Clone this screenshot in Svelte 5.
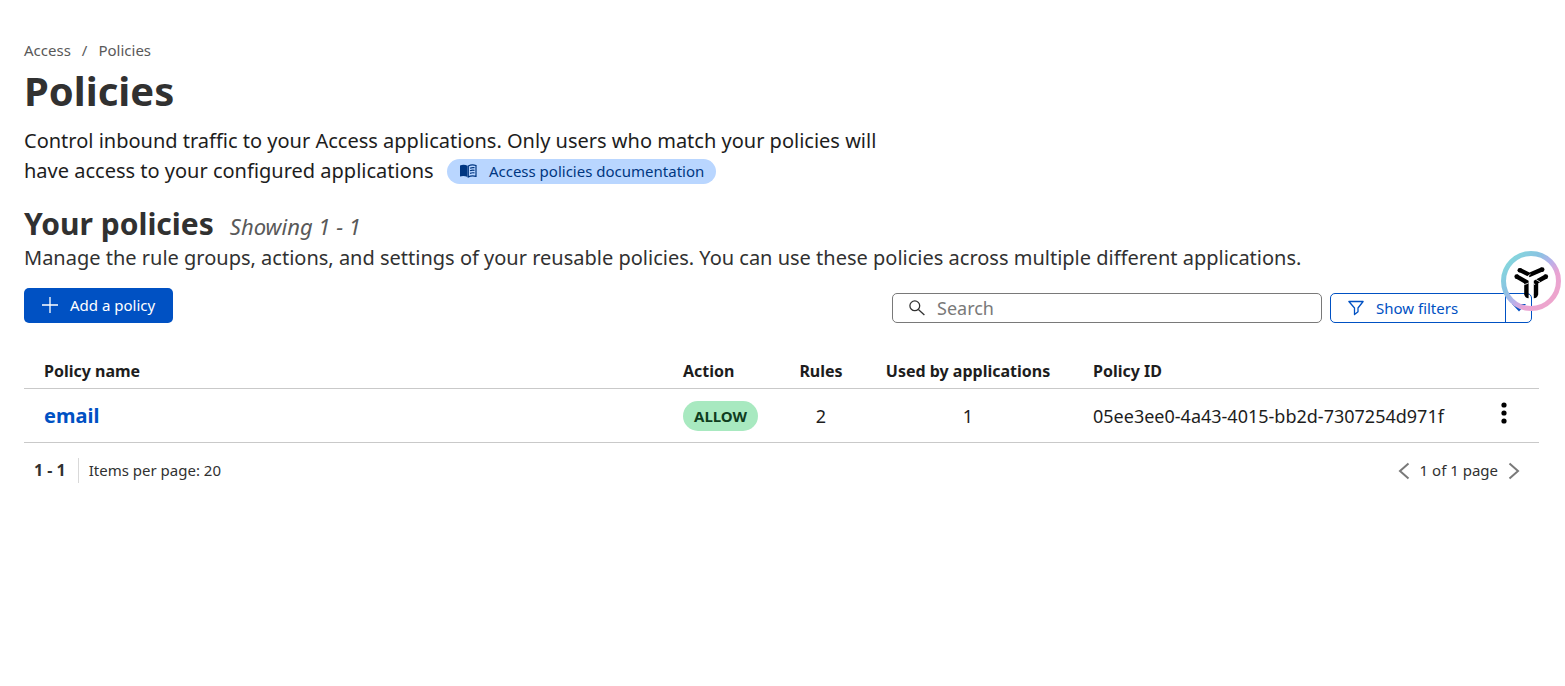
<script>
  const policies = [
    { name: 'email', action: 'ALLOW', rules: 2, apps: 1, id: '05ee3ee0-4a43-4015-bb2d-7307254d971f' }
  ];
  let query = $state('');
</script>

<main>
  <nav class="crumbs" aria-label="Breadcrumb">
    <a href="#access">Access</a><span>/</span><a href="#policies">Policies</a>
  </nav>
  <h1>Policies</h1>
  <p class="intro">
    <span>Control inbound traffic to your Access applications. Only users who match your policies will have access to your configured applications</span>
    <a class="doc" href="#docs">
      <svg width="18" height="14" viewBox="0 0 18 14" aria-hidden="true">
        <path d="M1 1.6C3.5.4 6 .5 8.6 1.8V13C6 11.7 3.5 11.6 1 12.4Z" fill="currentColor" />
        <path d="M9.3 2C11.6.7 14.3.5 17 1.5V12.3C14.3 11.5 11.7 11.6 9.3 12.9Z" fill="none" stroke="currentColor" stroke-width="1.2" />
        <path d="M11 4.2C12.5 3.5 14 3.4 15.5 3.7M11 6.8C12.5 6.1 14 6 15.5 6.3M11 9.4C12.5 8.7 14 8.6 15.5 8.9" fill="none" stroke="currentColor" stroke-width="1.2" />
      </svg>
      Access policies documentation
    </a>
  </p>

  <section>
    <div class="heading">
      <h2>Your policies</h2>
      <em>Showing 1 - 1</em>
    </div>
    <p class="summary">Manage the rule groups, actions, and settings of your reusable policies. You can use these policies across multiple different applications.</p>

    <div class="toolbar">
      <button class="add" type="button">
        <svg width="16" height="16" viewBox="0 0 16 16" aria-hidden="true"><path d="M8 0V16M0 8H16" stroke="currentColor" stroke-width="1.3" /></svg>
        Add a policy
      </button>
      <div class="tools">
        <label class="search">
          <svg width="16" height="16" viewBox="0 0 16 16" aria-label="Search"><circle cx="5.8" cy="5.8" r="4.9" /><path d="M9.4 9.4L15.4 15" /></svg>
          <input type="text" placeholder="Search" bind:value={query} />
        </label>
        <div class="filters">
          <button class="show" type="button">
            <svg width="16" height="16" viewBox="0 0 16 16" aria-hidden="true"><path d="M.9 1.5H15.1L10 8V11.8L6.5 14.5V8Z" fill="none" stroke="currentColor" stroke-width="1.3" stroke-linejoin="round" /></svg>
            Show filters
          </button>
          <button class="more" type="button" aria-label="Filter options">
            <svg width="14" height="8" viewBox="0 0 14 8" aria-hidden="true"><path d="M0 0H14L7 7.5Z" fill="currentColor" /></svg>
          </button>
        </div>
      </div>
    </div>

    <table>
      <colgroup>
        <col />
        <col class="c-action" />
        <col class="c-rules" />
        <col class="c-apps" />
        <col class="c-id" />
        <col class="c-menu" />
      </colgroup>
      <thead>
        <tr>
          <th>Policy name</th>
          <th>Action</th>
          <th class="num">Rules</th>
          <th class="num">Used by applications</th>
          <th>Policy ID</th>
          <th></th>
        </tr>
      </thead>
      <tbody>
        {#each policies as policy (policy.id)}
          <tr>
            <td class="name"><a href="#policy">{policy.name}</a></td>
            <td><span class="badge">{policy.action}</span></td>
            <td class="num">{policy.rules}</td>
            <td class="num">{policy.apps}</td>
            <td>{policy.id}</td>
            <td class="menu">
              <button type="button" aria-label="Policy actions">
                <svg width="6" height="22" viewBox="0 0 6 22" aria-hidden="true"><circle cx="3" cy="3" r="2.6" /><circle cx="3" cy="11" r="2.6" /><circle cx="3" cy="19" r="2.6" /></svg>
              </button>
            </td>
          </tr>
        {/each}
      </tbody>
    </table>

    <footer>
      <div class="range"><strong>1 - 1</strong><span>Items per page: 20</span></div>
      <div class="pager">
        <button type="button" aria-label="Previous page"><svg width="12" height="18" viewBox="0 0 12 18" aria-hidden="true"><path d="M10.5 1.5L2 9L10.5 16.5" /></svg></button>
        <span>1 of 1 page</span>
        <button type="button" aria-label="Next page"><svg width="12" height="18" viewBox="0 0 12 18" aria-hidden="true"><path d="M1.5 1.5L10 9L1.5 16.5" /></svg></button>
      </div>
    </footer>
  </section>
</main>

<button class="assistant" type="button" aria-label="Assistant">
  <svg width="60" height="60" viewBox="0 0 60 60" aria-hidden="true">
    <defs>
      <linearGradient id="ring" x1="0.1" y1="0.15" x2="0.85" y2="0.85">
        <stop offset="0" stop-color="#85d5dd" />
        <stop offset="0.3" stop-color="#89c3e2" />
        <stop offset="0.55" stop-color="#b9b0ea" />
        <stop offset="0.75" stop-color="#e8a3d3" />
        <stop offset="1" stop-color="#eda5cd" />
      </linearGradient>
    </defs>
    <circle cx="30" cy="30" r="27.5" fill="none" stroke="url(#ring)" stroke-width="5" />
    <g fill="none" stroke="#000" stroke-width="4.4">
      <path d="M18.5 18.9L28 23.6M27.6 24.2L41.5 18.2" />
      <path d="M15 25.2L25.4 31V43.5" />
      <path d="M45.5 25.2L35 31V43.5" />
    </g>
    <g fill="#000">
      <circle cx="18.8" cy="19.2" r="2.3" /><circle cx="41.2" cy="18.6" r="2.3" />
      <circle cx="15.7" cy="25.6" r="2.3" /><circle cx="44.8" cy="25.6" r="2.3" />
      <path d="M23.2 43H27.6V47.3Q24 47.3 23.2 43ZM32.8 43H37.2Q36.5 47.3 32.8 47.3Z" />
    </g>
    <path d="M25 26.5L29.5 23.2M22.5 34L27.5 32M35 28.5L39 31M32.5 32L34 34" stroke="#fff" stroke-width="0.8" />
  </svg>
</button>

<style>
  :global(body) {
    margin: 0;
    background: #fff;
    color: #1d1d1d;
    font-family: 'Noto Sans', 'Open Sans', sans-serif;
    font-size: 16px;
  }
  main { padding: 40px 26px 0 24px; }
  h1, h2, p { margin: 0; }
  a { color: inherit; text-decoration: none; }
  button { font: inherit; padding: 0; border: 0; background: none; color: inherit; cursor: pointer; }
  svg { flex: none; }
  .crumbs { display: flex; gap: 11px; font-size: 15px; line-height: 20px; color: #595959; }
  h1 { margin-top: 6px; font-size: 40px; line-height: 50px; color: #313131; }
  .intro { max-width: 900px; margin-top: 10px; font-size: 20px; line-height: 30px; }
  .doc {
    display: inline-flex;
    align-items: center;
    gap: 12px;
    margin-left: 8px;
    padding: 0 12px;
    border-radius: 13px;
    background: #b9d6ff;
    color: #003681;
    font-size: 15px;
    line-height: 25px;
  }
  .heading { display: flex; align-items: baseline; gap: 16px; margin-top: 22px; line-height: 32px; color: #313131; }
  h2 { font-size: 30px; }
  em { font-size: 22px; color: #595959; }
  .summary { margin-top: 1px; font-size: 20px; line-height: 30px; color: #313131; }
  .toolbar { display: flex; justify-content: space-between; align-items: flex-end; margin-top: 15px; padding-right: 7px; }
  .add {
    display: flex;
    align-items: center;
    gap: 12px;
    height: 35px;
    padding: 0 18px 2px;
    border-radius: 5px;
    background: #0051c3;
    color: #fff;
    font-size: 15px;
  }
  .tools { display: flex; gap: 8px; }
  .search {
    box-sizing: border-box;
    display: flex;
    align-items: center;
    gap: 12px;
    width: 430px;
    height: 30px;
    padding: 0 16px;
    border: 1px solid #797979;
    border-radius: 5px;
  }
  .search svg { fill: none; stroke: #313131; stroke-width: 1.3; }
  input { flex: 1; min-width: 0; padding: 0; border: 0; outline: 0; background: none; font: inherit; font-size: 18px; }
  input::placeholder { color: #797979; opacity: 1; }
  .filters { box-sizing: border-box; display: flex; height: 30px; border: 1px solid #0051c3; border-radius: 5px; color: #0051c3; }
  .show { display: flex; align-items: center; gap: 12px; width: 174px; padding-left: 17px; font-size: 15px; }
  .more { display: flex; align-items: center; justify-content: center; width: 26px; border-left: 1px solid #0051c3; }
  table { width: 100%; margin-top: 30px; border-collapse: collapse; }
  .c-action { width: 116px; }
  .c-rules { width: 84px; }
  .c-apps { width: 210px; }
  .c-id { width: 397px; }
  .c-menu { width: 69px; }
  tr { border-bottom: 1px solid #c9c9c9; }
  th { height: 35px; padding: 0 20px; font-size: 16px; text-align: left; white-space: nowrap; }
  td { height: 53px; padding: 0 20px; font-size: 18px; white-space: nowrap; }
  .num { text-align: center; }
  td.name { font-size: 20px; font-weight: 700; color: #0051c3; }
  .badge { display: inline-block; padding: 0 11px; border-radius: 15px; background: #a8e9c0; color: #0f3d20; font-size: 15px; font-weight: 700; line-height: 30px; }
  td.menu { padding: 0 31px; }
  .menu button { display: block; }
  footer { display: flex; justify-content: space-between; align-items: center; padding: 15px 19px 0 10px; font-size: 15px; line-height: 25px; color: #313131; }
  .range { display: flex; }
  .range strong { padding-right: 12px; border-right: 1px solid #d9d9d9; font-size: 16px; }
  .range span { padding-left: 10px; }
  .pager { display: flex; align-items: center; gap: 10px; }
  .pager button { display: flex; }
  .pager svg { fill: none; stroke: #797979; stroke-width: 2; }
  .assistant { position: fixed; top: 251px; right: 4px; width: 60px; height: 60px; border-radius: 50%; }
  .assistant svg { display: block; }
</style>
